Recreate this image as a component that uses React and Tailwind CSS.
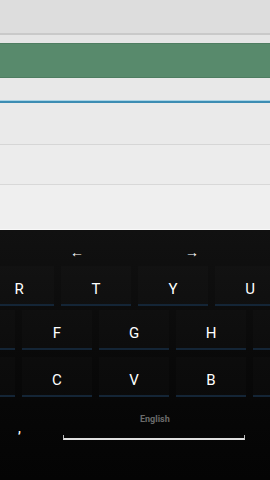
import React from "react";

function Key({ label }) {
  return (
    <div className="w-[70px] h-[40px] shrink-0 bg-white/[0.015] border-b-2 border-[#142536] flex items-center justify-center pt-[8px] text-white text-[15px]">
      {label}
    </div>
  );
}

export default function App() {
  const row1 = ["R", "T", "Y", "U"];
  const row2 = ["", "F", "G", "H", " "];
  const row3 = ["", "C", "V", "B", " "];

  return (
    <div className="w-[270px] h-[480px] overflow-hidden flex flex-col bg-[#0a0a0a]" style={{ fontFamily: "Roboto, 'Noto Sans', sans-serif" }}>
      {/* app area */}
      <div className="h-[33px] bg-[#dddddd]" />
      <div className="h-[2px] bg-[#c9c9c9]" />
      <div className="h-[8px] bg-[#e5e5e5]" />
      <div className="h-[35px] bg-[#588a6c] border-t border-b border-[#4e7d61]" />
      <div className="h-[23px] bg-[#e8e8e8] border-b border-[#a8d4e6]" />
      <div className="h-[2px] bg-[#3d8db3]" />
      <div className="h-[42px] bg-[#eaeaea] border-b border-[#d6d6d6]" />
      <div className="h-[40px] bg-[#ececec] border-b border-[#d8d8d8]" />
      <div className="h-[45px] bg-[#efefef] border-b border-[#f8f8f8]" />

      {/* keyboard */}
      <div className="flex-1 flex flex-col bg-gradient-to-b from-[#111111] to-[#040404]">
        <div className="h-[36px] flex items-center pt-[8px] text-white text-[14px]">
          <span className="ml-[70px]">←</span>
          <span className="ml-[101px]">→</span>
        </div>
        <div className="flex gap-[7px] ml-[-16px]">
          {row1.map((k) => (
            <Key key={k} label={k} />
          ))}
        </div>
        <div className="flex gap-[7px] ml-[-55px] mt-[4px]">
          {row2.map((k, i) => (
            <Key key={i} label={k} />
          ))}
        </div>
        <div className="flex gap-[7px] ml-[-55px] mt-[7px]">
          {row3.map((k, i) => (
            <Key key={i} label={k} />
          ))}
        </div>
        <div className="relative flex-1">
          <div className="absolute left-[140px] top-[16px] text-[9px] font-bold text-[#6b6b6b]">English</div>
          <div className="absolute left-[18px] top-[23px] text-white font-bold text-[12px]">,</div>
          <div className="absolute left-[63px] top-[38px] w-[182px] h-[5px] border-l border-r border-b-2 border-[#e0e0e0] border-t-0" style={{ borderLeftColor: "#bbbbbb", borderRightColor: "#bbbbbb" }} />
        </div>
      </div>
    </div>
  );
}
